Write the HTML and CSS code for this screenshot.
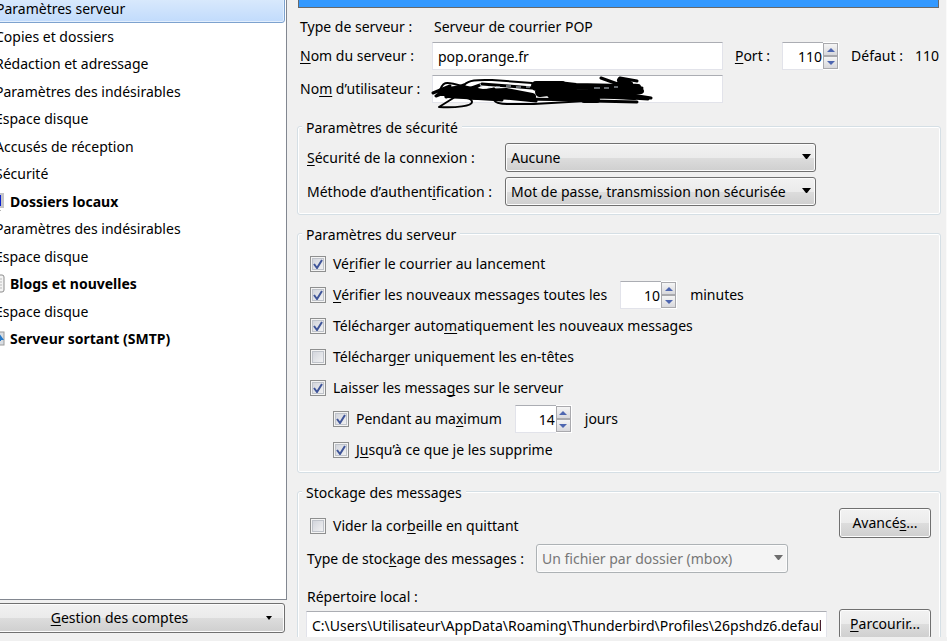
FILE: index.html
```html
<!DOCTYPE html>
<html lang="fr">
<head>
  <meta charset="UTF-8">
  <meta name="viewport" content="width=device-width, initial-scale=1.0">
  <title>Paramètres des comptes</title>
  <link rel="stylesheet" href="styles.css">
</head>
<body>
  <aside class="sidebar">
    <ul class="accounts">
      <li class="selected"><a href="#">Paramètres serveur</a></li>
      <li><a href="#">Copies et dossiers</a></li>
      <li><a href="#">Rédaction et adressage</a></li>
      <li><a href="#">Paramètres des indésirables</a></li>
      <li><a href="#">Espace disque</a></li>
      <li><a href="#">Accusés de réception</a></li>
      <li><a href="#">Sécurité</a></li>
      <li class="account">
        <svg width="17" height="20" viewBox="0 0 17 20"><rect x="0" y="1" width="16" height="15" fill="#c4c4c8"/><rect x="2" y="3" width="11" height="11" fill="#0a1fd0"/><path d="M4 17h8v1h1v1H3v-1h1z" fill="#b5b5b5"/></svg>
        <a href="#">Dossiers locaux</a>
      </li>
      <li><a href="#">Paramètres des indésirables</a></li>
      <li><a href="#">Espace disque</a></li>
      <li class="account">
        <svg width="17" height="20" viewBox="0 0 17 20"><rect x="1" y="1" width="15" height="17" rx="2" fill="#f4f4f4" stroke="#8c8c8c"/><path d="M4 5h10M4 8h10M4 11h10M4 14h10" stroke="#bbb"/></svg>
        <a href="#">Blogs et nouvelles</a>
      </li>
      <li><a href="#">Espace disque</a></li>
      <li class="account">
        <svg width="17" height="20" viewBox="0 0 17 20"><rect x="1" y="3" width="15" height="13" fill="#d9dde2" stroke="#9a9a9a"/><path d="M11 4l5 7h-3v1H7v-1H5z" fill="#2478c8"/></svg>
        <a href="#">Serveur sortant (SMTP)</a>
      </li>
    </ul>
    <button class="btn manage"><span><u>G</u>estion des comptes</span><svg width="6" height="4" viewBox="0 0 6 4"><path d="M0 0h6L3 4z"/></svg></button>
  </aside>

  <main class="panel">
    <div class="banner"></div>

    <div class="fields">
      <span>Type de serveur :</span>
      <span class="type">Serveur de courrier POP</span>

      <label for="host"><u>N</u>om du serveur :</label>
      <input class="text" id="host" type="text" value="pop.orange.fr">
      <label for="port"><u>P</u>ort :</label>
      <div class="spin">
        <input class="text" id="port" type="number" value="110">
        <div class="arrows">
          <button aria-label="Augmenter"><svg width="8" height="4" viewBox="0 0 8 4"><path d="M4 0l4 4H0z"/></svg></button>
          <button aria-label="Diminuer"><svg width="8" height="4" viewBox="0 0 8 4"><path d="M0 0h8L4 4z"/></svg></button>
        </div>
      </div>
      <span>Défaut :</span>
      <span>110</span>

      <label for="user">No<u>m</u> d’utilisateur :</label>
      <div class="masked">
        <input class="text" id="user" type="text">
        <svg class="scribble" width="240" height="46" viewBox="0 0 240 46">
          <g fill="none" stroke="#000" stroke-linecap="round" stroke-linejoin="round">
            <path stroke-width="2" d="M13 26C16 13 19 13 36 18M38 17C44 11 54 12 66 12L106 15M29 29L13 39C30 40 46 38 46 34C46 30 38 29 29 29M68 31C68 37 80 36 108 36L160 33"/>
            <path stroke-width="3" d="M7 25L24 18L10 28L38 17L20 29L54 17L34 28L68 21L44 30L76 32M56 16L82 18L106 20M70 29L110 33M96 31L160 32M175 10L200 19L216 20M194 10L211 13M168 33L211 34M206 27L225 30M190 29L222 31"/>
            <path stroke-width="8" d="M16 24L36 21L56 25L80 24L106 29L84 27L54 28L22 26"/>
            <path stroke-width="10" d="M110 18L136 18L114 24L146 20L126 26L166 28L162 30L170 24"/>
            <path stroke-width="6" d="M132 16L150 18L196 19M146 24L200 25L215 23M194 12L204 16L190 17L212 19L200 21M158 32L171 32M150 27L188 28L208 29"/>
          </g>
          <path d="M54 16l2 3M62 19h3M70 19h4M80 18h5M90 19h5M100 19h4M168 20h6M178 20h5M188 19h4" fill="none" stroke="#c9d3dd"/>
        </svg>
      </div>
    </div>

    <fieldset>
      <legend>Paramètres de sécurité</legend>
      <div class="security">
        <label for="secure"><u>S</u>écurité de la connexion :</label>
        <select class="btn" id="secure"><option>Aucune</option></select>
        <label for="auth">Méthode d’authent<u>i</u>fication :</label>
        <select class="btn" id="auth"><option>Mot de passe, transmission non sécurisée</option></select>
      </div>
    </fieldset>

    <fieldset>
      <legend>Paramètres du serveur</legend>
      <div class="checks">
        <div class="check">
          <input type="checkbox" id="launch" checked>
          <label for="launch">Vé<u>r</u>ifier le courrier au lancement</label>
        </div>
        <div class="check">
          <input type="checkbox" id="every" checked>
          <label for="every"><u>V</u>érifier les nouveaux messages toutes les</label>
          <div class="spin">
            <input class="text" type="number" value="10" aria-label="Minutes">
            <div class="arrows">
              <button aria-label="Augmenter"><svg width="8" height="4" viewBox="0 0 8 4"><path d="M4 0l4 4H0z"/></svg></button>
              <button aria-label="Diminuer"><svg width="8" height="4" viewBox="0 0 8 4"><path d="M0 0h8L4 4z"/></svg></button>
            </div>
          </div>
          <span>minutes</span>
        </div>
        <div class="check">
          <input type="checkbox" id="auto" checked>
          <label for="auto">Télécharger auto<u>m</u>atiquement les nouveaux messages</label>
        </div>
        <div class="check">
          <input type="checkbox" id="headers">
          <label for="headers">Télécharg<u>e</u>r uniquement les en-têtes</label>
        </div>
        <div class="check">
          <input type="checkbox" id="leave" checked>
          <label for="leave">Laisser les messa<u>g</u>es sur le serveur</label>
        </div>
        <div class="check sub">
          <input type="checkbox" id="days" checked>
          <label for="days">Pendant au ma<u>x</u>imum</label>
          <div class="spin">
            <input class="text" type="number" value="14" aria-label="Jours">
            <div class="arrows">
              <button aria-label="Augmenter"><svg width="8" height="4" viewBox="0 0 8 4"><path d="M4 0l4 4H0z"/></svg></button>
              <button aria-label="Diminuer"><svg width="8" height="4" viewBox="0 0 8 4"><path d="M0 0h8L4 4z"/></svg></button>
            </div>
          </div>
          <span>jours</span>
        </div>
        <div class="check sub">
          <input type="checkbox" id="until" checked>
          <label for="until">J<u>u</u>squ’à ce que je les supprime</label>
        </div>
      </div>
    </fieldset>

    <fieldset>
      <legend>Stockage des messages</legend>
      <div class="row">
        <div class="check">
          <input type="checkbox" id="trash">
          <label for="trash">Vider la cor<u>b</u>eille en quittant</label>
        </div>
        <button class="btn side">Avancé<u>s</u>...</button>
      </div>
      <div class="store">
        <label for="store">Type de stoc<u>k</u>age des messages :</label>
        <select class="btn" id="store" disabled><option>Un fichier par dossier (mbox)</option></select>
      </div>
      <label class="dir-label" for="dir">Répertoire local :</label>
      <div class="row">
        <input class="text dir" id="dir" type="text" value="C:\Users\Utilisateur\AppData\Roaming\Thunderbird\Profiles\26pshdz6.default" readonly>
        <button class="btn side"><u>P</u>arcourir...</button>
      </div>
    </fieldset>
  </main>
</body>
</html>
```
FILE: styles.css
```css
* {
  box-sizing: border-box;
  margin: 0;
  padding: 0;
}

body {
  display: flex;
  height: 100vh;
  padding-bottom: 4px;
  overflow: hidden;
  background-color: #f0f0f0;
  color: #000;
  font: 14px/20px "Noto Sans", "Segoe UI", sans-serif;
}

input,
select,
button {
  font: inherit;
  color: inherit;
}

u {
  text-underline-offset: 2px;
  text-decoration-skip-ink: none;
}

label,
span {
  white-space: nowrap;
}

/* Account tree */
.sidebar {
  display: flex;
  flex-direction: column;
  gap: 3px;
  flex: 0 0 287px;
  padding-bottom: 4px;
  overflow: hidden;
}

.accounts {
  flex: 1;
  margin: -5px 0 0 -12px;
  border-right: 1px solid #828790;
  border-bottom: 1px solid #828790;
  background-color: #fff;
  list-style: none;
}

.accounts li {
  display: flex;
  align-items: center;
  height: 27px;
  margin-right: 1px;
  padding-left: 7px;
}

.accounts li:nth-child(odd) {
  height: 28px;
}

.accounts a {
  color: inherit;
  text-decoration: none;
}

.accounts .account {
  gap: 5px;
  padding-left: 0;
  font-weight: bold;
}

.accounts .account svg {
  flex: 0 0 17px;
}

.accounts .selected {
  border: 1px solid #7da2ce;
  border-radius: 3px;
  background: linear-gradient(#dcebfc, #c1dbfc);
  box-shadow: inset 0 0 0 1px #e3effd;
}

.btn {
  height: 30px;
  border: 1px solid #707070;
  border-radius: 3px;
  background: linear-gradient(#f2f2f2, #ebebeb 50%, #dddddd 50%, #cfcfcf);
  box-shadow: inset 0 0 0 1px #fcfcfc;
}

.manage {
  display: flex;
  align-items: center;
  gap: 16px;
  margin: 0 2px 0 -12px;
  padding: 0 12px 0 0;
}

.manage span {
  flex: 1;
}

/* Server settings */
.panel {
  flex: 1;
  min-width: 0;
  padding: 0 5px 0 10px;
  border-right: 1px solid #fafafa;
  overflow: hidden;
}

.banner {
  height: 8px;
  margin: 0 2px 0 1px;
  border: 1px solid #696969;
  border-top: none;
  background-color: #3399ff;
}

.fields {
  display: grid;
  grid-template-columns: 120px minmax(0, 1fr) auto auto auto auto;
  grid-template-rows: 20px 28px 28px;
  align-items: center;
  row-gap: 5px;
  column-gap: 12px;
  margin-bottom: 11px;
  padding: 9px 2px 0 3px;
}

.fields .type {
  grid-column: span 5;
  padding-left: 2px;
}

.text {
  width: 100%;
  height: 28px;
  padding: 0 5px;
  border: 1px solid #e2e3ea;
  border-top-color: #abadb3;
  background-color: #fff;
  outline: none;
}

.masked {
  position: relative;
}

/* Pen strokes over the user name */
.scribble {
  position: absolute;
  top: -7px;
  left: -6px;
}

.spin {
  display: flex;
  width: 57px;
}

.spin .text {
  padding: 0 1px;
  border-right: none;
  text-align: right;
  appearance: textfield;
}

.spin .text::-webkit-inner-spin-button {
  appearance: none;
}

.arrows {
  display: flex;
  flex-direction: column;
  flex: 0 0 16px;
  padding: 1px 1px 1px 0;
  background-color: #fff;
}

.arrows button {
  display: flex;
  align-items: center;
  justify-content: center;
  flex: 1;
  border: 1px solid #a9a9ad;
  background: linear-gradient(#f5f5f5, #d8d8dc);
}

.arrows path {
  fill: #4e66b0;
}

fieldset {
  min-width: 0;
  margin-top: 6px;
  padding: 5px 9px 8px;
  border: 1px solid #d5dfe5;
  border-radius: 3px;
  box-shadow: inset 0 0 0 1px #fff;
}

legend {
  margin-left: -5px;
  padding: 4px 4px 0;
  background-color: #f0f0f0;
}

.security {
  display: grid;
  grid-template-columns: 192px minmax(0, 311px);
  align-items: center;
  gap: 5px 6px;
}

select.btn {
  height: 29px;
  padding: 0 24px 0 5px;
  appearance: none;
  background:
    url("data:image/svg+xml,%3Csvg xmlns='http://www.w3.org/2000/svg' width='9' height='5'%3E%3Cpath d='M0 0h9L5 5H4z'/%3E%3C/svg%3E") right 4px top 10px no-repeat,
    linear-gradient(#f2f2f2, #ebebeb 50%, #dddddd 50%, #cfcfcf);
}

select.btn:disabled {
  border-color: #adb2b5;
  background:
    url("data:image/svg+xml,%3Csvg xmlns='http://www.w3.org/2000/svg' width='9' height='5'%3E%3Cpath d='M0 0h9L5 5H4z' fill='%236d6d6d'/%3E%3C/svg%3E") right 4px top 10px no-repeat,
    #f4f4f4;
  color: #777;
  opacity: 1;
}

.checks {
  display: flex;
  flex-direction: column;
  gap: 3px;
}

.check {
  display: flex;
  align-items: center;
  height: 28px;
  padding-left: 3px;
}

.check.sub {
  padding-left: 26px;
}

.check .spin {
  margin: 0 13px;
}

input[type="checkbox"] {
  width: 16px;
  height: 16px;
  margin-right: 7px;
  border: 1px solid #8e8f8f;
  appearance: none;
  background: linear-gradient(135deg, #cdd0d8, #f6f6f6);
  box-shadow: inset 0 0 0 1px #f4f4f4, inset 0 0 0 2px #bfc3ca;
}

input[type="checkbox"]:checked {
  background:
    url("data:image/svg+xml,%3Csvg xmlns='http://www.w3.org/2000/svg' width='14' height='14'%3E%3Cpath d='M3 7l3 4 5-8' fill='none' stroke='%233f5599' stroke-width='2'/%3E%3C/svg%3E") center no-repeat,
    linear-gradient(135deg, #cdd0d8, #f6f6f6);
}

.row {
  display: flex;
  align-items: flex-end;
  gap: 12px;
}

.row .check {
  flex: 1;
  height: 24px;
}

.row .dir {
  flex: 1;
  min-width: 0;
  margin-left: -1px;
}

.side {
  flex: 0 0 92px;
}

.store {
  display: grid;
  grid-template-columns: 223px minmax(0, 252px);
  align-items: center;
  gap: 6px;
  margin: 6px 0 12px;
}

.dir-label {
  display: block;
  line-height: 24px;
}
```
